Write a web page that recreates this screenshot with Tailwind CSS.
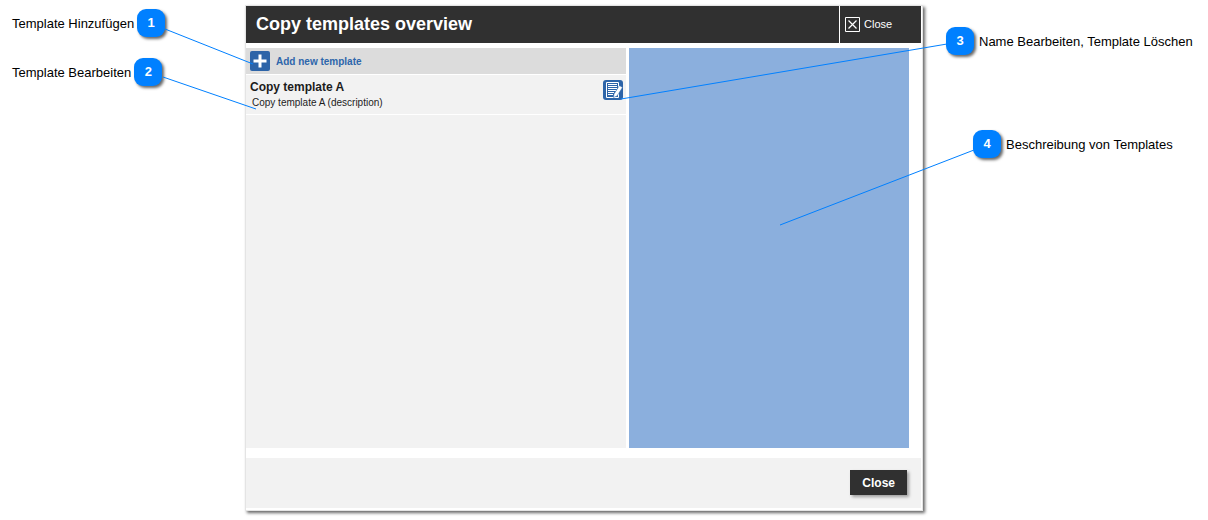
<!DOCTYPE html>
<html lang="de">
<head>
    <meta charset="UTF-8">
    <meta name="viewport" content="width=device-width, initial-scale=1.0">
    <title>Copy templates overview</title>
    <script src="https://cdn.jsdelivr.net/npm/@tailwindcss/browser@4"></script>
</head>
<body class="bg-white text-black font-['Liberation_Sans',Arial,sans-serif]">
    <div class="relative flex pt-[5px] pb-[9px]">

        <!-- Callouts left -->
        <aside class="w-[245px] shrink-0 pl-3 pt-1 text-[13px] leading-7">
            <div class="flex gap-[3px]">
                <span class="pt-px">Template Hinzufügen</span>
                <span class="w-7 h-7 rounded-[9px] bg-[#0080ff] text-white font-bold text-center shadow-[2px_2px_3px_rgba(0,0,0,0.6)]">1</span>
            </div>
            <div class="flex gap-[3px] mt-5">
                <span class="pt-px">Template Bearbeiten</span>
                <span class="w-7 h-7 rounded-[9px] bg-[#0080ff] text-white font-bold text-center shadow-[2px_2px_3px_rgba(0,0,0,0.6)]">2</span>
            </div>
        </aside>

        <!-- Dialog -->
        <main class="grow min-w-0 bg-white border border-[#e4e4e4] pr-px pb-0.5 shadow-[2px_2px_3px_rgba(0,0,0,0.6)]">
            <header class="flex h-[37px] bg-[#303030] text-white">
                <h1 class="grow pl-[10px] text-lg leading-[37px] font-bold">Copy templates overview</h1>
                <button type="button" class="flex items-center gap-1 w-[82px] pl-[5px] border-l border-white text-[11px]">
                    <svg class="w-[15px] h-[15px]" viewBox="0 0 15 15" fill="none" stroke="#fff">
                        <path d="M.5 .5h14v14H.5z"/>
                        <path d="M3.5 3.5l8 8M11.5 3.5l-8 8" stroke-width="1.2"/>
                    </svg>
                    Close
                </button>
            </header>

            <div class="flex gap-[3px] min-h-[400px] mt-[5px] pr-3">
                <section class="grow bg-[#f2f2f2]">
                    <button type="button" class="flex items-center gap-1.5 w-full h-[27px] pl-1 bg-[#dcdcdc] border-b border-white text-[10px] font-bold text-[#2d66ab]">
                        <svg class="w-5 h-5" viewBox="0 0 20 20">
                            <rect width="20" height="20" rx="2" fill="#2d64a8"/>
                            <path d="M8.500 3.500h3v5h5v3h-5v5h-3v-5h-5v-3h5z" fill="#fff"/>
                        </svg>
                        Add new template
                    </button>
                    <div class="flex justify-between h-10 pl-1 pr-[3px] pt-[5px] border-b border-white text-[#1c1c1c]">
                        <div>
                            <h2 class="text-xs leading-[14px] font-bold">Copy template A</h2>
                            <p class="pl-0.5 text-[10px] leading-[18px]">Copy template A (description)</p>
                        </div>
                        <button type="button" aria-label="Edit template" class="w-5 h-5">
                            <svg class="w-5 h-5" viewBox="0 0 20 20">
                                <rect width="20" height="20" rx="3" fill="#2d64a8"/>
                                <path d="M3.500 2.500h12v15h-12z" fill="#2d64a8" stroke="#fff"/>
                                <path d="M5 4.500h9M5 6.500h9M5 8.500h9M5 10.500h8M5 12.500h6M5 14.500h5" stroke="#fff"/>
                                <path d="M16.500 5.500l3 2-5.500 8.500-3.500 1.500.5-3.500z" fill="#fff" stroke="#2d64a8" stroke-width=".5"/>
                            </svg>
                        </button>
                    </div>
                </section>
                <section class="w-[280px] shrink-0 bg-[#8bafdd]"></section>
            </div>

            <footer class="flex justify-end h-[50px] mt-[10px] pt-3 pr-[14px] bg-[#f2f2f2]">
                <button type="button" class="h-[25px] px-3 bg-[#303030] text-white text-xs font-bold shadow-[2px_2px_3px_rgba(0,0,0,0.35)]">Close</button>
            </footer>
        </main>

        <!-- Callouts right -->
        <aside class="w-[285px] shrink-0 pl-[23px] pt-[22px] text-[13px] leading-7">
            <div class="flex gap-[5px]">
                <span class="w-7 h-7 rounded-[9px] bg-[#0080ff] text-white font-bold text-center shadow-[2px_2px_3px_rgba(0,0,0,0.6)]">3</span>
                <span class="pt-px">Name Bearbeiten, Template Löschen</span>
            </div>
            <div class="flex gap-[5px] mt-[74px] pl-[27px]">
                <span class="w-7 h-7 rounded-[9px] bg-[#0080ff] text-white font-bold text-center shadow-[2px_2px_3px_rgba(0,0,0,0.6)]">4</span>
                <span class="pt-px">Beschreibung von Templates</span>
            </div>
        </aside>

        <!-- Pointer lines, each set anchored to its own side -->
        <svg class="absolute left-0 top-0 w-[260px] h-[120px] pointer-events-none" viewBox="0 0 260 120" stroke="#0080ff">
            <path d="M165 29L253 64M163 77L256 109"/>
        </svg>
        <svg class="absolute right-0 top-0 w-[608px] h-[240px] pointer-events-none" viewBox="600 0 608 240" fill="none" stroke="#0080ff">
            <path d="M947 44L621 99M974 150L780 225"/>
        </svg>
    </div>
</body>
</html>
